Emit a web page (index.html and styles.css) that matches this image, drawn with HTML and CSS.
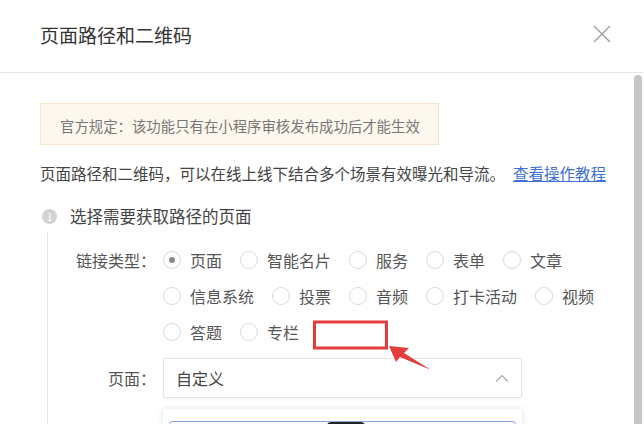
FILE: index.html
```html
<!DOCTYPE html>
<html lang="zh-CN">
<head>
<meta charset="UTF-8">
<meta name="viewport" content="width=device-width, initial-scale=1.0">
<title>页面路径和二维码</title>
<link rel="stylesheet" href="styles.css">
</head>
<body>
<div class="dialog">
    <div class="dialog-header">
        <h2 class="dialog-title">页面路径和二维码</h2>
        <svg class="close-icon" viewBox="0 0 18 18"><path d="M1 1L17 17M17 1L1 17" stroke="#9a9a9a" stroke-width="1.2" fill="none"/></svg>
    </div>

    <div class="dialog-body">
        <div class="notice">官方规定：该功能只有在小程序审核发布成功后才能生效</div>
        <p class="desc">页面路径和二维码，可以在线上线下结合多个场景有效曝光和导流。<a href="#">查看操作教程</a></p>

        <div class="step-title"><span class="step-num">1</span>选择需要获取路径的页面</div>
        <div class="step-body">
            <div class="form-row">
                <label class="form-label">链接类型：</label>
                <div class="radio-group">
                    <label class="radio checked"><span class="radio-circle"></span>页面</label>
                    <label class="radio"><span class="radio-circle"></span>智能名片</label>
                    <label class="radio"><span class="radio-circle"></span>服务</label>
                    <label class="radio"><span class="radio-circle"></span>表单</label>
                    <label class="radio"><span class="radio-circle"></span>文章</label>
                    <label class="radio"><span class="radio-circle"></span>信息系统</label>
                    <label class="radio"><span class="radio-circle"></span>投票</label>
                    <label class="radio"><span class="radio-circle"></span>音频</label>
                    <label class="radio"><span class="radio-circle"></span>打卡活动</label>
                    <label class="radio"><span class="radio-circle"></span>视频</label>
                    <label class="radio"><span class="radio-circle"></span>答题</label>
                    <label class="radio"><span class="radio-circle"></span>专栏</label>
                </div>
            </div>

            <div class="form-row select-row">
                <label class="form-label">页面：</label>
                <div class="select-wrap">
                    <div class="select">
                        <span>自定义</span>
                        <svg class="chevron" viewBox="0 0 14 8"><path d="M1 7.5L7 1.5L13 7.5" stroke="#aaa" stroke-width="1.1" fill="none"/></svg>
                    </div>
                    <div class="dropdown">
                        <div class="dropdown-input"></div>
                        <span class="dropdown-tip"></span>
                    </div>
                </div>
            </div>
        </div>
    </div>

    <div class="scrollbar"></div>

    <!-- annotation: red box + arrow -->
    <svg class="annotation" viewBox="0 0 644 424">
        <rect x="314.5" y="322" width="72" height="26" fill="none" stroke="#e43d3d" stroke-width="3"/>
        <polygon points="389,346 409,348 404,353 431,370 400,357 396,362" fill="#e43d3d"/>
    </svg>
</div>
</body>
</html>
```

FILE: styles.css
```css
body {
    margin: 0;
    background: #fff;
    font-family: "Noto Sans CJK SC", "Noto Sans", sans-serif;
}

.dialog {
    position: relative;
    width: 644px;
    height: 424px;
    overflow: hidden;
}

.dialog-header {
    height: 72px;
    border-bottom: 1px solid #e6e6e6;
    display: flex;
    align-items: center;
    justify-content: space-between;
    padding: 0 33px 0 40px;
}
.dialog-title {
    margin: -3px 0 0;
    font-size: 19px;
    font-weight: normal;
    color: #333;
}
.close-icon {
    width: 18px;
    height: 18px;
    margin-top: -4px;
}

.dialog-body {
    padding: 0 40px;
}

.notice {
    margin-top: 30px;
    width: 399px;
    height: 42px;
    box-sizing: border-box;
    border: 1px solid #f4e6c8;
    background: #fdf8ee;
    padding: 4px 0 0 19px;
    font-size: 14.4px;
    line-height: 36px;
    color: #777;
}

.desc {
    margin: 16px -10px 0 0;
    white-space: nowrap;
    font-size: 15.5px;
    line-height: 24px;
    color: #444;
}
.desc a {
    margin-left: 8px;
    color: #3d6fd6;
    text-decoration: underline;
}

.step-title {
    margin-top: 19px;
    display: flex;
    align-items: center;
    font-size: 16.5px;
    line-height: 24px;
    color: #444;
}
.step-num {
    width: 15px;
    height: 15px;
    margin: 0 13px 0 2px;
    border-radius: 50%;
    background: #d3d3d3;
    color: #fff;
    font-size: 10px;
    line-height: 15px;
    text-align: center;
}

.step-body {
    margin: 4px 0 0 7px;
    padding-top: 10px;
    height: 400px;
    border-left: 1px solid #e6e6e6;
}

.form-row {
    display: flex;
}
.form-label {
    width: 108px;
    flex: none;
    margin-right: 7px;
    text-align: right;
    font-size: 16px;
    line-height: 36px;
    color: #555;
}

.radio-group {
    width: 441px;
    display: flex;
    flex-wrap: wrap;
    column-gap: 18px;
}
.radio {
    display: flex;
    align-items: center;
    height: 36px;
    font-size: 16px;
    color: #555;
}
.radio-circle {
    width: 18px;
    height: 18px;
    box-sizing: border-box;
    margin-right: 9px;
    border: 1px solid #dadada;
    border-radius: 50%;
    display: flex;
    align-items: center;
    justify-content: center;
}
.radio.checked .radio-circle::after {
    content: "";
    width: 6px;
    height: 6px;
    border-radius: 50%;
    background: #8a8a8a;
}

.select-row {
    margin-top: 8px;
}
.select-row .form-label {
    line-height: 40px;
}
.select {
    width: 359px;
    height: 40px;
    box-sizing: border-box;
    padding: 0 12px;
    border: 1px solid #e4e4e4;
    border-radius: 2px;
    box-shadow: 0 1px 2px rgba(0, 0, 0, 0.05);
    display: flex;
    align-items: center;
    justify-content: space-between;
    font-size: 16px;
    color: #444;
}
.chevron {
    width: 14px;
    height: 8px;
}

.dropdown {
    position: relative;
    margin-top: 11px;
    width: 359px;
    height: 60px;
    box-sizing: border-box;
    padding: 12px 6px 0;
    background: #fff;
    box-shadow: 0 0 6px rgba(0, 0, 0, 0.12);
}
.dropdown-input {
    height: 36px;
    border: 1px solid #8ea7e8;
    border-radius: 3px;
}
.dropdown-tip {
    position: absolute;
    left: 164px;
    top: 13px;
    width: 38px;
    height: 14px;
    border-radius: 4px;
    background: #222;
}

.scrollbar {
    position: absolute;
    right: 2px;
    top: 75px;
    bottom: 0;
    width: 8px;
    border-radius: 4px 4px 0 0;
    background: #c6c6c6;
}

.annotation {
    position: absolute;
    left: 0;
    top: 0;
    width: 644px;
    height: 424px;
    pointer-events: none;
}
```
